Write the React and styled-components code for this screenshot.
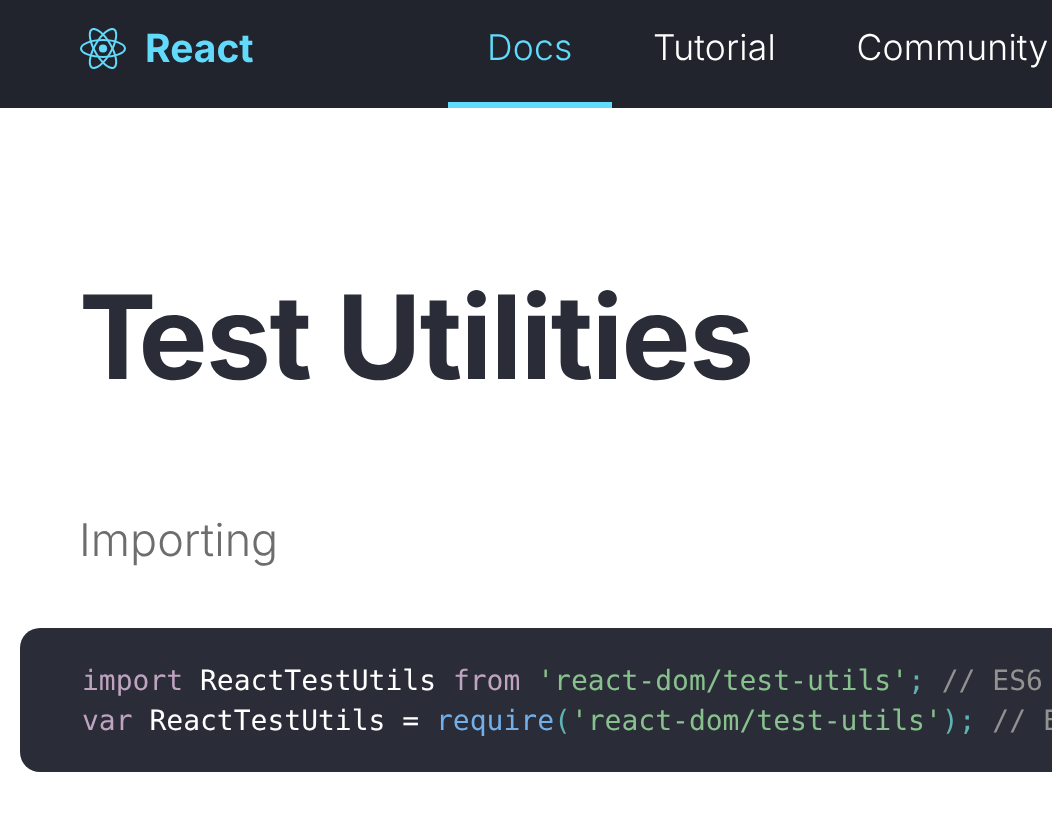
import React from 'react'
import styled, { createGlobalStyle } from 'styled-components'

const Global = createGlobalStyle`
  html, body {
    margin: 0;
    padding: 0;
    background: #fff;
    overflow: hidden;
  }
  body {
    font-family: Inter, "Liberation Sans", sans-serif;
    text-rendering: geometricPrecision;
  }
`

const Page = styled.div`
  width: 1052px;
  height: 836px;
  overflow: hidden;
  will-change: opacity;
`

const Header = styled.header`
  display: flex;
  align-items: stretch;
  height: 108px;
  padding-left: 80px;
  background: #21242c;
  white-space: nowrap;
`

const Brand = styled.a`
  display: flex;
  align-items: center;
  gap: 19px;
  width: 368px;
  flex: none;
  padding-bottom: 12px;
  box-sizing: border-box;
  color: #61dafb;
  font-size: 39px;
  font-weight: 700;
  svg {
    width: 46px;
    height: 41px;
  }
`

const Nav = styled.nav`
  display: flex;
  align-items: stretch;
  gap: 2.5px;
`

const NavLink = styled.a`
  display: flex;
  align-items: center;
  padding: 0 39px 13px;
  font-size: 35.5px;
  font-weight: 300;
  letter-spacing: 0.2px;
  color: ${p => (p.$active ? '#61dafb' : '#fff')};
  box-shadow: ${p => (p.$active ? 'inset 0 -6px 0 #61dafb' : 'none')};
`

const Main = styled.main`
  padding: 0 0 0 20px;
`

const Title = styled.h1`
  margin: 0;
  padding: 167px 0 0 59px;
  font-size: 116px;
  line-height: 124px;
  font-weight: 700;
  letter-spacing: -1.5px;
  color: #2a2d37;
`

const KernedLetter = styled.span`
  letter-spacing: -18px;
`

const Subtitle = styled.p`
  margin: 0;
  padding: 113px 0 0 59px;
  font-size: 45px;
  line-height: 56px;
  font-weight: 300;
  color: #6d6d6d;
`

const CodeBlock = styled.pre`
  margin: 60px 0 0;
  padding: 33px 0 31px 62px;
  width: 1032px;
  box-sizing: border-box;
  overflow: hidden;
  background: #2a2d37;
  border-radius: 20px 0 0 20px;
  font-family: "DejaVu Sans Mono", monospace;
  font-size: 28px;
  line-height: 40px;
  color: #fff;
`

const Keyword = styled.span`
  color: #bfa3c0;
`
const Str = styled.span`
  color: #88c08e;
`
const Punct = styled.span`
  color: #5fb3b3;
`
const Fn = styled.span`
  color: #72aee8;
`
const Comment = styled.span`
  color: #929292;
`

const ReactLogo = () => (
  <svg viewBox="-11.5 -10.23 23 20.46" aria-hidden="true">
    <circle r="2.05" fill="#61dafb" />
    <g stroke="#61dafb" strokeWidth="1" fill="none">
      <ellipse rx="11" ry="4.2" />
      <ellipse rx="11" ry="4.2" transform="rotate(60)" />
      <ellipse rx="11" ry="4.2" transform="rotate(120)" />
    </g>
  </svg>
)

export default function App() {
  return (
    <Page>
      <Global />
      <Header>
        <Brand>
          <ReactLogo />
          React
        </Brand>
        <Nav>
          <NavLink $active>Docs</NavLink>
          <NavLink>Tutorial</NavLink>
          <NavLink>Community</NavLink>
        </Nav>
      </Header>
      <Main>
        <Title><KernedLetter>T</KernedLetter>est Utilities</Title>
        <Subtitle>Importing</Subtitle>
        <CodeBlock>
          <Keyword>import</Keyword> ReactTestUtils <Keyword>from</Keyword> <Str>'react-dom/test-utils'</Str>
          <Punct>;</Punct> <Comment>// ES6</Comment>
          {'\n'}
          <Keyword>var</Keyword> ReactTestUtils = <Fn>require</Fn><Punct>(</Punct><Str>'react-dom/test-utils'</Str>
          <Punct>)</Punct><Punct>;</Punct> <Comment>// ES5 with npm</Comment>
        </CodeBlock>
      </Main>
    </Page>
  )
}
